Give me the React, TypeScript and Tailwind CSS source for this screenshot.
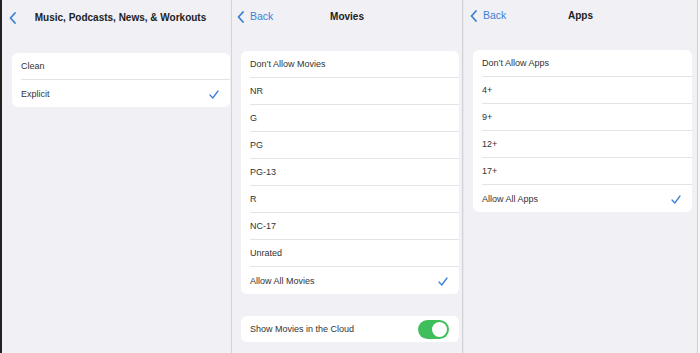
import React from "react";

const font = { fontFamily: '"Liberation Sans", Arial, sans-serif' };

function Chevron() {
  return (
    <svg width="7" height="12" viewBox="0 0 7 12" fill="none">
      <path d="M6 1 L1.5 6 L6 11" stroke="#3b82d6" strokeWidth="1.8" strokeLinecap="round" strokeLinejoin="round" />
    </svg>
  );
}

function Check() {
  return (
    <svg width="10" height="9" viewBox="0 0 10 9" fill="none">
      <path d="M1 5 L3.8 8 L9 1" stroke="#3b82d6" strokeWidth="1.3" strokeLinecap="round" strokeLinejoin="round" />
    </svg>
  );
}

function Row({ label, checked, last }: { label: string; checked?: boolean; last?: boolean }) {
  return (
    <div className="h-[27px] pl-[9px] flex">
      <div className={`flex-1 flex items-center justify-between pr-[11px] pt-[2px] ${last ? "" : "border-b border-[#e4e4e8]"}`}>
        <span className="text-[9px] text-[#333]">{label}</span>
        {checked && <Check />}
      </div>
    </div>
  );
}

function Toggle() {
  return (
    <div className="w-[31px] h-[19px] rounded-full bg-[#3fbf5c] flex items-center justify-end pr-[2px]">
      <div className="w-[15px] h-[15px] rounded-full bg-white" />
    </div>
  );
}

export default function App() {
  return (
    <div className="w-[700px] h-[353px] flex bg-[#f0f0f5] overflow-hidden" style={font}>
      <div className="w-[2px] bg-[#222]" />
      {/* Panel 1 */}
      <div className="w-[229px] flex flex-col">
        <div className="h-[35px] flex items-center pl-[7px] pr-[2px]">
          <Chevron />
          <div className="flex-1 text-center text-[10px] font-bold text-[#222] pr-[4px]">
            Music, Podcasts, News, &amp; Workouts
          </div>
        </div>
        <div className="ml-[10px] mr-[1px] mt-[18px] bg-white rounded-[6px]">
          <Row label="Clean" />
          <Row label="Explicit" checked last />
        </div>
      </div>
      <div className="w-px bg-[#d4d4d8]" />
      {/* Panel 2 */}
      <div className="w-[230px] flex flex-col">
        <div className="h-[33px] flex items-center pl-[5px] relative">
          <Chevron />
          <span className="ml-[6px] text-[10.5px] text-[#3b82d6]">Back</span>
          <span className="absolute left-0 right-0 text-center text-[10px] font-bold text-[#222] pointer-events-none">
            Movies
          </span>
        </div>
        <div className="ml-[9px] mr-[3px] mt-[18px] bg-white rounded-[6px]">
          <Row label="Don’t Allow Movies" />
          <Row label="NR" />
          <Row label="G" />
          <Row label="PG" />
          <Row label="PG-13" />
          <Row label="R" />
          <Row label="NC-17" />
          <Row label="Unrated" />
          <Row label="Allow All Movies" checked last />
        </div>
        <div className="ml-[9px] mr-[3px] mt-[22px] bg-white rounded-[6px] h-[26px] pl-[9px] pr-[10px] flex items-center justify-between">
          <span className="text-[9px] text-[#333] pt-[1px]">Show Movies in the Cloud</span>
          <Toggle />
        </div>
      </div>
      <div className="w-px bg-[#d4d4d8]" />
      <div className="w-px bg-[#e8e8ec]" />
      {/* Panel 3 */}
      <div className="w-[233px] flex flex-col">
        <div className="h-[31px] flex items-center pl-[6px] relative">
          <Chevron />
          <span className="ml-[6px] text-[10.5px] text-[#3b82d6]">Back</span>
          <span className="absolute left-0 right-0 text-center text-[10px] font-bold text-[#222] pointer-events-none">
            Apps
          </span>
        </div>
        <div className="ml-[9px] mr-[5px] mt-[19px] bg-white rounded-[6px]">
          <Row label="Don’t Allow Apps" />
          <Row label="4+" />
          <Row label="9+" />
          <Row label="12+" />
          <Row label="17+" />
          <Row label="Allow All Apps" checked last />
        </div>
      </div>
      <div className="w-px bg-[#d0d0d4]" />
      <div className="flex-1 bg-[#f7f7f9]" />
    </div>
  );
}
